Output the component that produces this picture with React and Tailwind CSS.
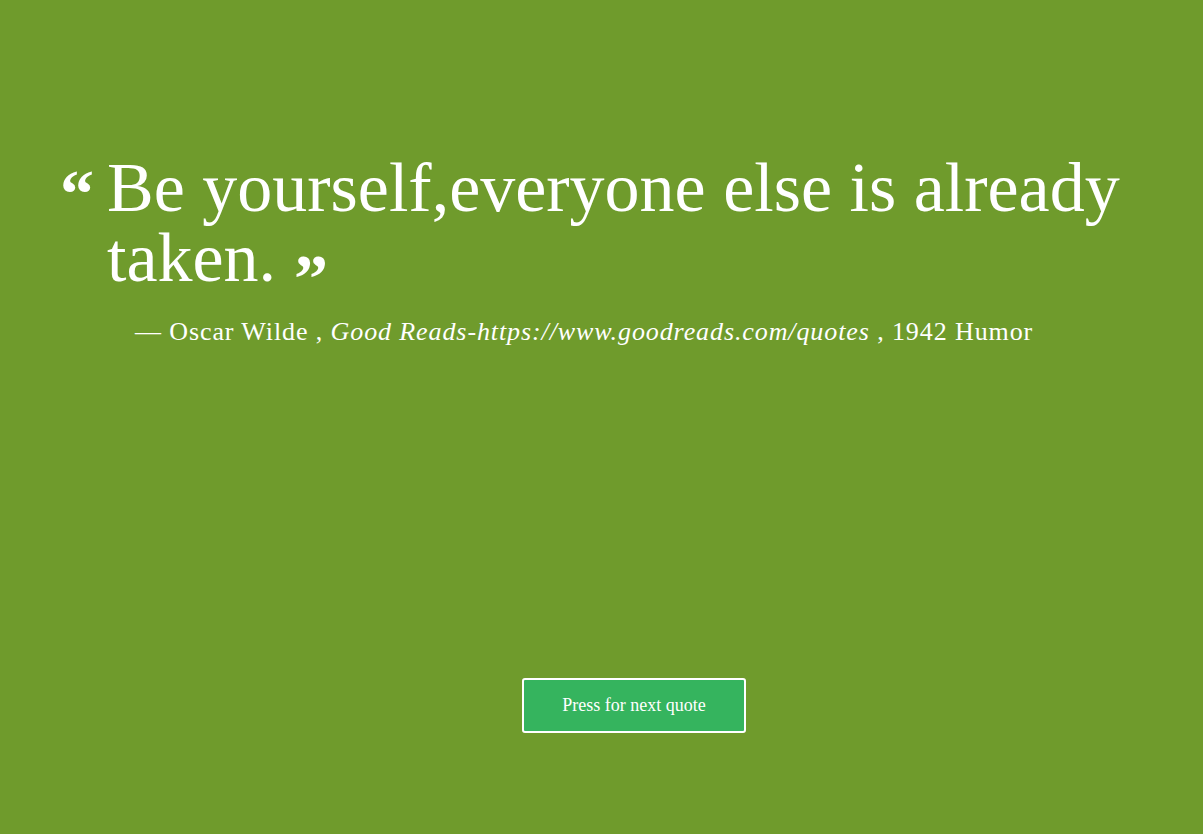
export default function App() {
  return (
    <div
      className="min-h-screen w-full bg-[#6f9b2c] text-white flex flex-col"
      style={{ fontFamily: '"Liberation Serif", serif' }}
    >
      <div className="px-[60px] pt-[153px]">
        <div className="flex items-start">
          <span className="w-[47px] shrink-0 text-[68px] font-bold leading-[70px] mt-[6px]">“</span>
          <p className="text-[70px] leading-[70px] pr-[20px]">
            Be yourself,everyone else is already taken.
            <span className="relative top-[20px] ml-[18px] text-[68px] font-bold leading-none">”</span>
          </p>
        </div>
        <p className="mt-[21px] pl-[75px] text-[26px] tracking-[0.9px] leading-[36px]">
          — Oscar Wilde , <em>Good Reads-https://www.goodreads.com/quotes</em> , 1942 Humor
        </p>
      </div>
      <div className="flex justify-center pl-[65px] mt-[328px]">
        <button className="w-[224px] h-[55px] rounded-[3px] border-2 border-white bg-[#35b45e] text-[18px] text-white">
          Press for next quote
        </button>
      </div>
    </div>
  );
}
